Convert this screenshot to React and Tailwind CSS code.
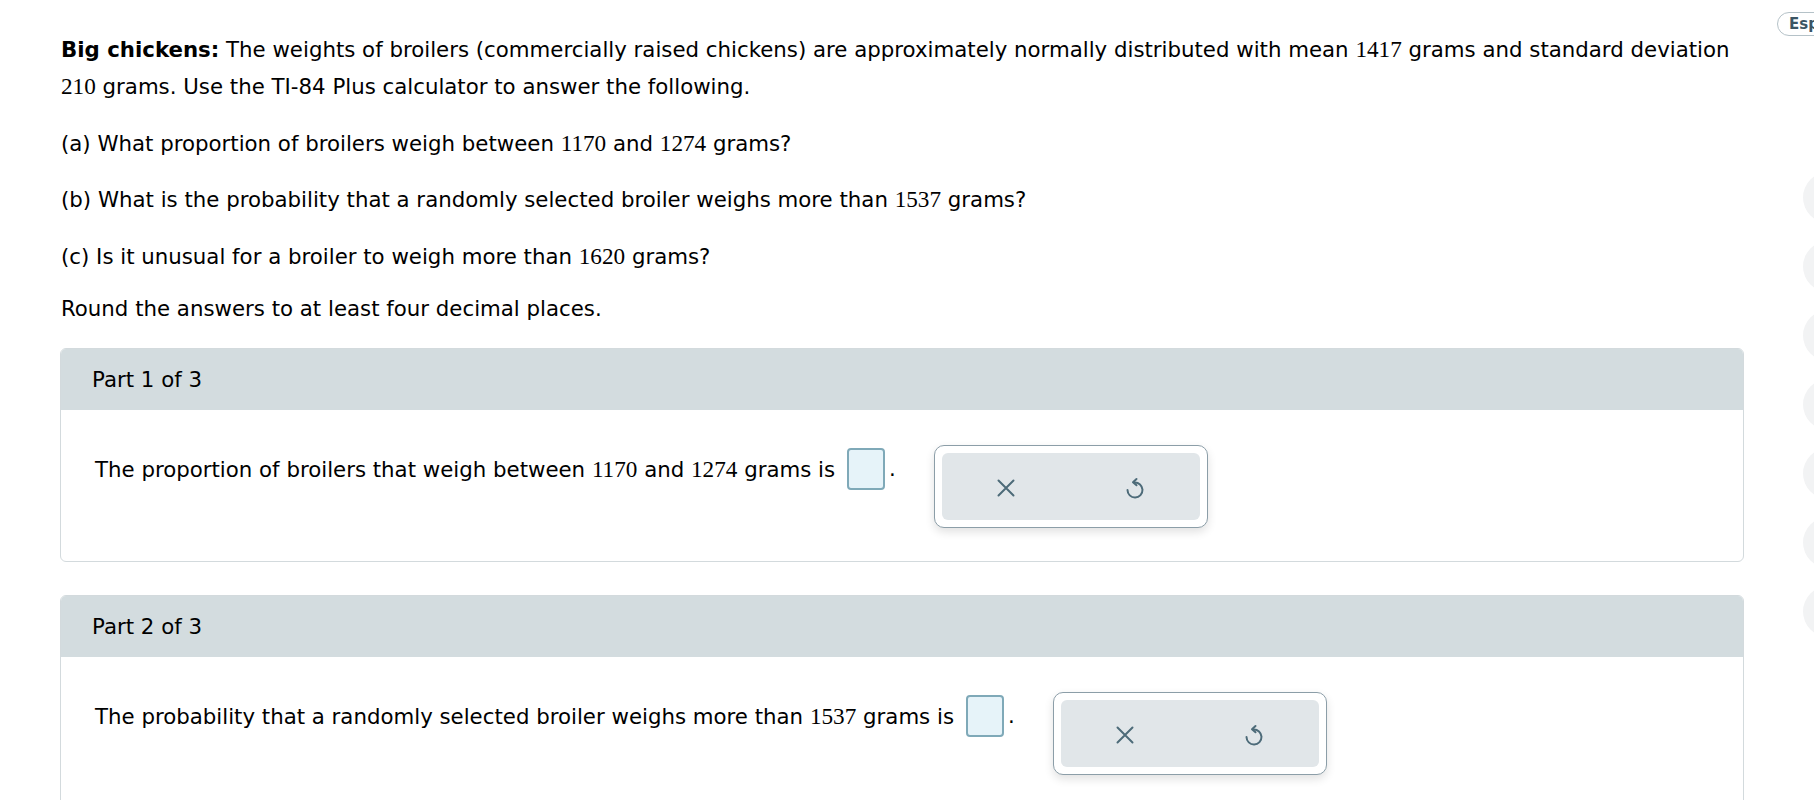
import React from "react";

const N = ({ children }) => (
  <span className="font-['Liberation_Serif',serif] text-[23.2px]">{children}</span>
);

const XIcon = () => (
  <svg width="24" height="24" viewBox="0 0 24 24" fill="none" stroke="#4d6b79" strokeWidth="2" strokeLinecap="round">
    <path d="M4.5 4.5L19.5 19.5M19.5 4.5L4.5 19.5" />
  </svg>
);

const UndoIcon = () => (
  <svg width="24" height="24" viewBox="0 0 24 24" fill="none" stroke="#4d6b79" strokeWidth="2" strokeLinecap="round" strokeLinejoin="round">
    <path d="M11.5 6.5A7.5 7.5 0 1 1 4.5 14" />
    <path d="M13.5 3L10 6.3L13.5 9.3" />
  </svg>
);

const Tools = () => (
  <div className="ml-[38px] w-[274px] h-[83px] shrink-0 rounded-[10px] border border-[#8c9ea8] bg-white p-[7px] shadow-[0_4px_10px_rgba(0,0,0,0.12)]">
    <div className="flex h-full rounded-[6px] bg-[#e1e6e9]">
      <div className="flex flex-1 items-center justify-center pt-[2px]">
        <XIcon />
      </div>
      <div className="flex flex-1 items-center justify-center pt-[2px]">
        <UndoIcon />
      </div>
    </div>
  </div>
);

const Input = () => (
  <span className="ml-[12px] inline-block h-[42px] w-[38px] shrink-0 rounded-[4px] border-2 border-[#7fa9b8] bg-[#e6f3f9]" />
);

const Part = ({ title, children, className = "" }) => (
  <div className={"rounded-[6px] border border-[#d3dadd] overflow-hidden " + className}>
    <div className="flex h-[61px] items-center bg-[#d3dcdf] pl-[31px] pt-[1px]">{title}</div>
    <div className="flex items-start pl-[34px] pt-[35px] pb-[33px]">
      <div className="mt-[3px] flex h-[42px] items-center whitespace-nowrap">
        <span>{children}</span>
        <Input />
        <span className="ml-[4px]">.</span>
      </div>
      <Tools />
    </div>
  </div>
);

export default function App() {
  return (
    <div className="relative min-h-[800px] w-full overflow-hidden bg-white font-['DejaVu_Sans',Verdana,sans-serif] text-[21.3px] leading-[36px] text-black">
      <div className="absolute left-[1777px] top-[12px] flex h-[24px] w-[90px] items-center rounded-full border border-[#b5c2c8] bg-white pl-[11px] text-[15px] font-bold text-[#3b5564]">
        Español
      </div>
      <div className="absolute left-[1803px] top-[172px] flex flex-col gap-[18px]">
        {[0, 1, 2, 3, 4, 5, 6].map((i) => (
          <div key={i} className="h-[51px] w-[51px] rounded-full bg-[#f2f3f4]" />
        ))}
      </div>

      <div className="pl-[61px] pr-[70px] pt-[31px]">
        <p className="w-[1705px]">
          <span className="font-bold">Big chickens:</span> The weights of broilers (commercially raised chickens) are approximately normally distributed with mean <N>1417</N> grams and standard deviation <N>210</N> grams. Use the TI-84 Plus calculator to answer the following.
        </p>
        <p className="mt-[20px]">
          (a) What proportion of broilers weigh between <N>1170</N> and <N>1274</N> grams?
        </p>
        <p className="mt-[19px]">
          (b) What is the probability that a randomly selected broiler weighs more than <N>1537</N> grams?
        </p>
        <p className="mt-[20px]">
          (c) Is it unusual for a broiler to weigh more than <N>1620</N> grams?
        </p>
        <p className="mt-[16px]">Round the answers to at least four decimal places.</p>

        <Part title="Part 1 of 3" className="-ml-[1px] mt-[21px]">
          The proportion of broilers that weigh between <N>1170</N> and <N>1274</N> grams is
        </Part>
        <Part title="Part 2 of 3" className="-ml-[1px] mt-[33px]">
          The probability that a randomly selected broiler weighs more than <N>1537</N> grams is
        </Part>
      </div>
    </div>
  );
}
